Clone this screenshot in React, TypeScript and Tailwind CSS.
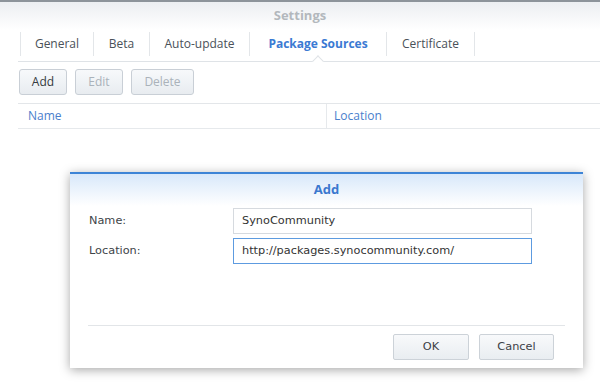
import React from "react";

const tabs = [
  { label: "General", w: 74 },
  { label: "Beta", w: 56 },
  { label: "Auto-update", w: 100 },
  { label: "Package Sources", w: 137, active: true },
  { label: "Certificate", w: 88 },
];

function Btn({ children, disabled, w }: { children: React.ReactNode; disabled?: boolean; w: string }) {
  return (
    <div
      className={`${w} h-[26px] flex items-center justify-center rounded-[3px] border border-[#c9cfd6] bg-gradient-to-b from-[#f7f9fb] to-[#e8ecf0] text-[12px] ${
        disabled ? "text-[#aab2ba]" : "text-[#343a40]"
      }`}
    >
      {children}
    </div>
  );
}

export default function App() {
  return (
    <div
      className="relative w-[600px] h-[382px] overflow-hidden bg-white"
      style={{ fontFamily: '"Open Sans", "Noto Sans", sans-serif' }}
    >
      <div className="h-[2px] bg-[#8d939a]" />
      <div className="h-[28px] bg-gradient-to-b from-[#eceef1] to-white flex items-center justify-center text-[13px] font-bold text-[#b3b8bd]">
        Settings
      </div>
      {/* tabs */}
      <div className="ml-[18px] h-[32px] border-b border-[#dfe3e7] flex items-start pl-[2px] pt-[2px]">
        {tabs.map((t, i) => (
          <div
            key={t.label}
            className={`relative h-[24px] flex items-center justify-center text-[12px] border-r border-[#e3e6e9] ${
              i === 0 ? "border-l" : ""
            } ${t.active ? "text-[#3b7ad3] font-bold text-[12.5px]" : "text-[#4a5159]"}`}
            style={{ width: t.w }}
          >
            {t.label}
            {t.active && (
              <div className="absolute left-1/2 -translate-x-1/2 bottom-[-9px] w-[8px] h-[8px] rotate-45 bg-white border-l border-t border-[#dfe3e7]" />
            )}
          </div>
        ))}
      </div>
      {/* toolbar */}
      <div className="ml-[18px] pl-[1px] pt-[7px] pb-[8px] border-b border-[#e3e6e9] flex gap-[8px]">
        <Btn w="w-[48px]">Add</Btn>
        <Btn w="w-[48px]" disabled>
          Edit
        </Btn>
        <Btn w="w-[63px]" disabled>
          Delete
        </Btn>
      </div>
      {/* grid header */}
      <div className="ml-[18px] h-[25px] border-b border-[#e6e9ec] flex text-[12px] text-[#4a80cc]">
        <div className="w-[309px] pl-[10px] flex items-center border-r border-[#e6e9ec]">Name</div>
        <div className="pl-[7px] flex items-center">Location</div>
      </div>

      {/* dialog */}
      <div
        className="absolute left-[70px] top-[172px] w-[513px] h-[196px] bg-white border-t-2 border-[#3d84d6] shadow-[0_2px_10px_rgba(0,0,0,0.35)] flex flex-col"
        style={{ fontFamily: '"DejaVu Sans", Verdana, sans-serif' }}
      >
        <div
          className="h-[32px] bg-gradient-to-b from-[#d8e8fa] to-white flex items-center justify-center text-[13px] font-bold text-[#3b78cf]"
          style={{ fontFamily: '"Open Sans", "Noto Sans", sans-serif' }}
        >
          Add
        </div>
        <div className="flex flex-col gap-[4px] pt-[2px] pl-[19px] text-[11.3px] text-[#404448]">
          <div className="flex items-center">
            <div className="w-[144px]">Name:</div>
            <div className="w-[299px] h-[26px] border border-[#d6dadf] flex items-center pl-[8px] text-[#333]">
              SynoCommunity
            </div>
          </div>
          <div className="flex items-center">
            <div className="w-[144px]">Location:</div>
            <div className="w-[299px] h-[26px] border border-[#5d9be0] flex items-center pl-[8px] text-[#333]">
              http://packages.synocommunity.com/
            </div>
          </div>
        </div>
        <div className="flex-1" />
        <div className="mx-[18px] border-t border-[#e2e5e8]" />
        <div className="flex justify-end gap-[10px] pr-[29px] pt-[8px] pb-[8px] text-[11.3px] text-[#3c4146]">
          <div className="w-[76px] h-[26px] flex items-center justify-center rounded-[2px] border border-[#ccd2d8] bg-gradient-to-b from-[#f8f9fb] to-[#e9edf1]">
            OK
          </div>
          <div className="w-[75px] h-[26px] flex items-center justify-center rounded-[2px] border border-[#ccd2d8] bg-gradient-to-b from-[#f8f9fb] to-[#e9edf1]">
            Cancel
          </div>
        </div>
      </div>
    </div>
  );
}
